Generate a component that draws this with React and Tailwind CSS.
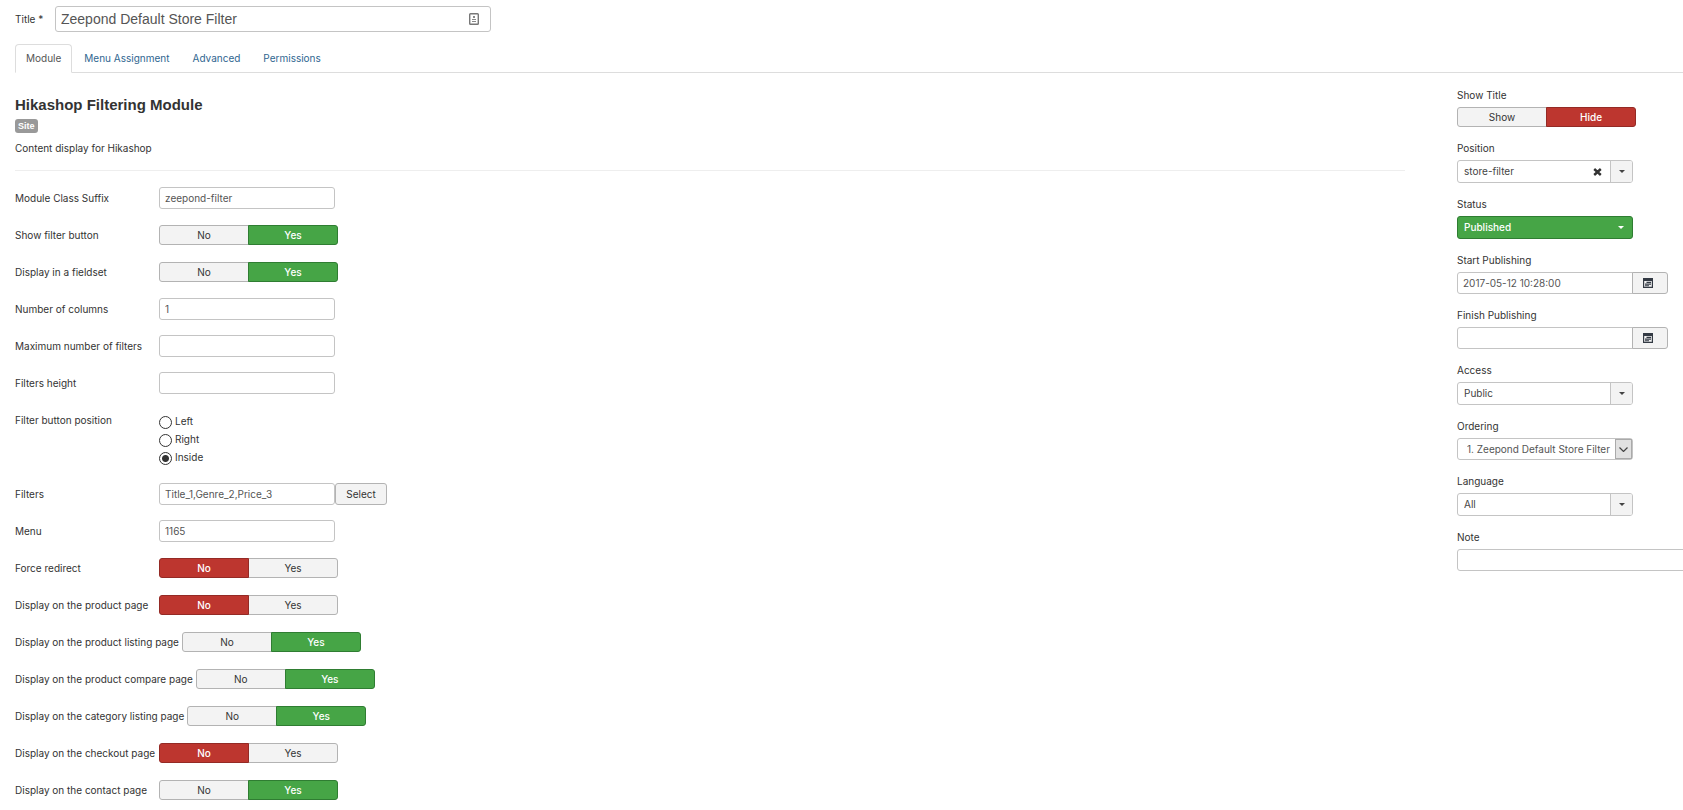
import React, { useState } from "react";

const inputBase =
  "block rounded-[3px] border border-[#c4c4c4] bg-white px-[5px] text-[10px] text-[#555] outline-none";

function Toggle({ name, options, value: initial, colour }) {
  const [value, setValue] = useState(initial);
  const tones = {
    green: "relative z-10 border-[#2f7d32] bg-[#46a546] text-white font-medium",
    red: "relative z-10 border-[#942a25] bg-[#bd362f] text-white font-medium",
    off: "border-[#b3b3b3] bg-[#f3f3f3] text-[#333]",
  };
  return (
    <div role="group" aria-label={name} className="flex h-5 shrink-0">
      {options.map((o, i) => {
        const on = o === value;
        const tone = on ? tones[colour[i]] : tones.off;
        return (
          <button
            key={o}
            type="button"
            aria-pressed={on}
            onClick={() => setValue(o)}
            className={`h-5 w-[90px] border text-center text-[10px] leading-[18px] ${i === 0 ? "rounded-l-[3px]" : "-ml-px rounded-r-[3px]"} ${tone}`}
          >
            {o}
          </button>
        );
      })}
    </div>
  );
}

function Row({ id, label, children }) {
  const Label = id ? "label" : "span";
  return (
    <div className="flex min-h-[22px] items-start">
      <Label htmlFor={id} className="min-w-36 shrink-0 whitespace-nowrap pr-[3px] leading-[22px]">
        {label}
      </Label>
      <div className="flex min-h-[22px] items-center">{children}</div>
    </div>
  );
}

function TextRow({ id, label, value, children }) {
  return (
    <Row id={id} label={label}>
      <input id={id} type="text" defaultValue={value} className={`${inputBase} h-[22px] w-44`} />
      {children}
    </Row>
  );
}

function YesNoRow({ label, value }) {
  return (
    <Row label={label}>
      <Toggle name={label} options={["No", "Yes"]} value={value} colour={["red", "green"]} />
    </Row>
  );
}

function Field({ id, label, children }) {
  const Label = id ? "label" : "span";
  return (
    <div>
      <Label htmlFor={id} className="mb-1 block leading-4">
        {label}
      </Label>
      {children}
    </div>
  );
}

function Caret() {
  return (
    <svg viewBox="0 0 6 3" className="h-[3px] w-1.5" fill="currentColor" aria-hidden="true">
      <path d="M0 0h6L3 3z" />
    </svg>
  );
}

function Dropdown({ id, options, green, clearable }) {
  const tone = green
    ? "border-[#2f7d32] bg-[#46a546] font-medium text-white"
    : "border-[#c4c4c4] bg-white text-[#444]";
  const arrow = green ? "text-white" : "border-l border-[#c4c4c4] bg-[#f3f3f3] text-[#444]";
  return (
    <div className={`relative h-[23px] w-44 overflow-hidden rounded-[3px] border ${tone}`}>
      <select id={id} className="block h-full w-full appearance-none bg-transparent pl-1.5 text-[10px] outline-none">
        {options.map((o) => (
          <option key={o}>{o}</option>
        ))}
      </select>
      {clearable && (
        <button type="button" aria-label="Clear" className="absolute inset-y-0 right-[29px] flex w-3 items-center justify-center">
          <svg viewBox="0 0 9 8" className="h-2 w-[9px]" aria-hidden="true">
            <path d="M1.2 1l6.6 6M7.8 1l-6.6 6" stroke="#333" strokeWidth="2.4" />
          </svg>
        </button>
      )}
      <span className={`pointer-events-none absolute inset-y-0 right-0 flex w-[22px] items-center justify-center ${arrow}`}>
        <Caret />
      </span>
    </div>
  );
}

function DateField({ id, label, value }) {
  return (
    <Field id={id} label={label}>
      <div className="flex">
        <input id={id} type="text" defaultValue={value} className={`${inputBase} h-[22px] w-44 rounded-r-none`} />
        <button
          type="button"
          aria-label={`${label} calendar`}
          className="-ml-px flex h-[22px] w-9 items-center rounded-r-[3px] border border-[#b3b3b3] bg-[#f3f3f3] pl-2.5"
        >
          <svg viewBox="0 0 10 10" className="h-2.5 w-2.5" aria-hidden="true">
            <path fill="#333a44" fillRule="evenodd" d="M0 0h10v10H0zM1.2 3v5.800h7.600V3z" />
            <path fill="#333a44" d="M3.500 3.800h4.500v1.200H3.500zM2 5.500h6v1.200H2zM2 7.200h4v1H2z" />
          </svg>
        </button>
      </div>
    </Field>
  );
}

const tabs = ["Module", "Menu Assignment", "Advanced", "Permissions"];

export default function App() {
  const [tab, setTab] = useState("Module");
  return (
    <div className="min-h-screen overflow-x-hidden bg-white pl-[15px] pt-1.5 font-[Inter,Arial,sans-serif] text-[10px] text-[#333]">
      <div className="flex items-center">
        <label htmlFor="title" className="w-10 shrink-0">
          Title *
        </label>
        <div className="relative w-[436px]">
          <input
            id="title"
            type="text"
            defaultValue="Zeepond Default Store Filter"
            className="block h-[26px] w-full rounded-[3px] border border-[#c4c4c4] px-[5px] font-['Liberation_Sans',Arial,sans-serif] text-sm text-[#555] outline-none"
          />
          <svg viewBox="0 0 10 12" className="absolute right-3 top-[7px] h-3 w-2.5" aria-hidden="true">
            <rect x=".7" y=".7" width="8.600" height="10.600" rx=".8" fill="none" stroke="#777" strokeWidth="1.400" />
            <path d="M4 3h2v2H4zM3 6h4v1H3zM3 8h4v1H3z" fill="#888" />
          </svg>
        </div>
      </div>

      <nav role="tablist" className="mt-3 flex h-[29px] border-b border-[#ddd]">
        {tabs.map((t) => (
          <button
            key={t}
            type="button"
            role="tab"
            aria-selected={t === tab}
            onClick={() => setTab(t)}
            className={`mr-px h-[29px] rounded-t border px-2.5 ${t === tab ? "border-[#ddd] border-b-white bg-white text-[#555]" : "border-transparent text-[#2f6690]"}`}
          >
            {t}
          </button>
        ))}
      </nav>

      <div className="flex gap-[52px] pt-3.5">
        <main className="min-w-0 flex-1 pt-2">
          <h1 className="font-['Liberation_Sans',Arial,sans-serif] text-[15px] font-bold leading-5">Hikashop Filtering Module</h1>
          <div className="mt-1 flex">
            <span className="rounded-[3px] bg-[#999] px-[3px] font-['Liberation_Sans',Arial,sans-serif] text-[9px] font-bold leading-[14px] text-white">Site</span>
          </div>
          <p className="mt-[7px] leading-4">Content display for Hikashop</p>
          <hr className="mb-4 mt-3.5 border-[#eee]" />

          <form className="flex flex-col gap-[15px]">
            <TextRow id="suffix" label="Module Class Suffix" value="zeepond-filter" />
            <YesNoRow label="Show filter button" value="Yes" />
            <YesNoRow label="Display in a fieldset" value="Yes" />
            <TextRow id="columns" label="Number of columns" value="1" />
            <TextRow id="max" label="Maximum number of filters" value="" />
            <TextRow id="height" label="Filters height" value="" />
            <Row label="Filter button position">
              <div role="radiogroup" aria-label="Filter button position" className="flex flex-col pb-px pt-1">
                {["Left", "Right", "Inside"].map((o) => (
                  <label key={o} className="flex h-[18px] items-center gap-[3px]">
                    <input
                      type="radio"
                      name="position"
                      defaultChecked={o === "Inside"}
                      className="h-[13px] w-[13px] appearance-none rounded-full border border-[#333] bg-white checked:bg-[radial-gradient(circle,#333_3px,white_4px)]"
                    />
                    <span className="pb-0.5 leading-4">{o}</span>
                  </label>
                ))}
              </div>
            </Row>
            <TextRow id="filters" label="Filters" value="Title_1,Genre_2,Price_3">
              <button type="button" className="h-[22px] w-[52px] rounded-[3px] border border-[#b3b3b3] bg-[#f3f3f3]">
                Select
              </button>
            </TextRow>
            <TextRow id="menu" label="Menu" value="1165" />
            <YesNoRow label="Force redirect" value="No" />
            <YesNoRow label="Display on the product page" value="No" />
            <YesNoRow label="Display on the product listing page" value="Yes" />
            <YesNoRow label="Display on the product compare page" value="Yes" />
            <YesNoRow label="Display on the category listing page" value="Yes" />
            <YesNoRow label="Display on the checkout page" value="No" />
            <YesNoRow label="Display on the contact page" value="Yes" />
          </form>
        </main>

        <aside className="flex w-[226px] shrink-0 flex-col gap-[13px]">
          <Field label="Show Title">
            <Toggle name="Show Title" options={["Show", "Hide"]} value="Hide" colour={["green", "red"]} />
          </Field>
          <Field id="pos" label="Position">
            <Dropdown id="pos" options={["store-filter"]} clearable />
          </Field>
          <Field id="status" label="Status">
            <Dropdown id="status" options={["Published", "Unpublished", "Trashed"]} green />
          </Field>
          <DateField id="start" label="Start Publishing" value="2017-05-12 10:28:00" />
          <DateField id="finish" label="Finish Publishing" value="" />
          <Field id="access" label="Access">
            <Dropdown id="access" options={["Public", "Registered", "Special"]} />
          </Field>
          <Field id="ordering" label="Ordering">
            <div className="relative h-[22px] w-44 rounded-[3px] border border-[#c4c4c4] bg-white">
              <select id="ordering" className="block h-full w-[154px] appearance-none overflow-hidden whitespace-nowrap bg-transparent pl-[9px] text-[10px] text-[#555] outline-none">
                <option>1. Zeepond Default Store Filter</option>
              </select>
              <span className="pointer-events-none absolute inset-y-0 right-0 flex w-[17px] items-center justify-center border border-[#aaa] bg-[#e1e1e1]">
                <svg viewBox="0 0 9 5" className="h-[5px] w-[9px]" fill="none" stroke="#444" strokeWidth="1.200" aria-hidden="true">
                  <path d="M.5.5l4 4 4-4" />
                </svg>
              </span>
            </div>
          </Field>
          <Field id="language" label="Language">
            <Dropdown id="language" options={["All", "English"]} />
          </Field>
          <Field id="note" label="Note">
            <input id="note" type="text" className={`${inputBase} h-[22px] w-[240px]`} />
          </Field>
        </aside>
      </div>
    </div>
  );
}
